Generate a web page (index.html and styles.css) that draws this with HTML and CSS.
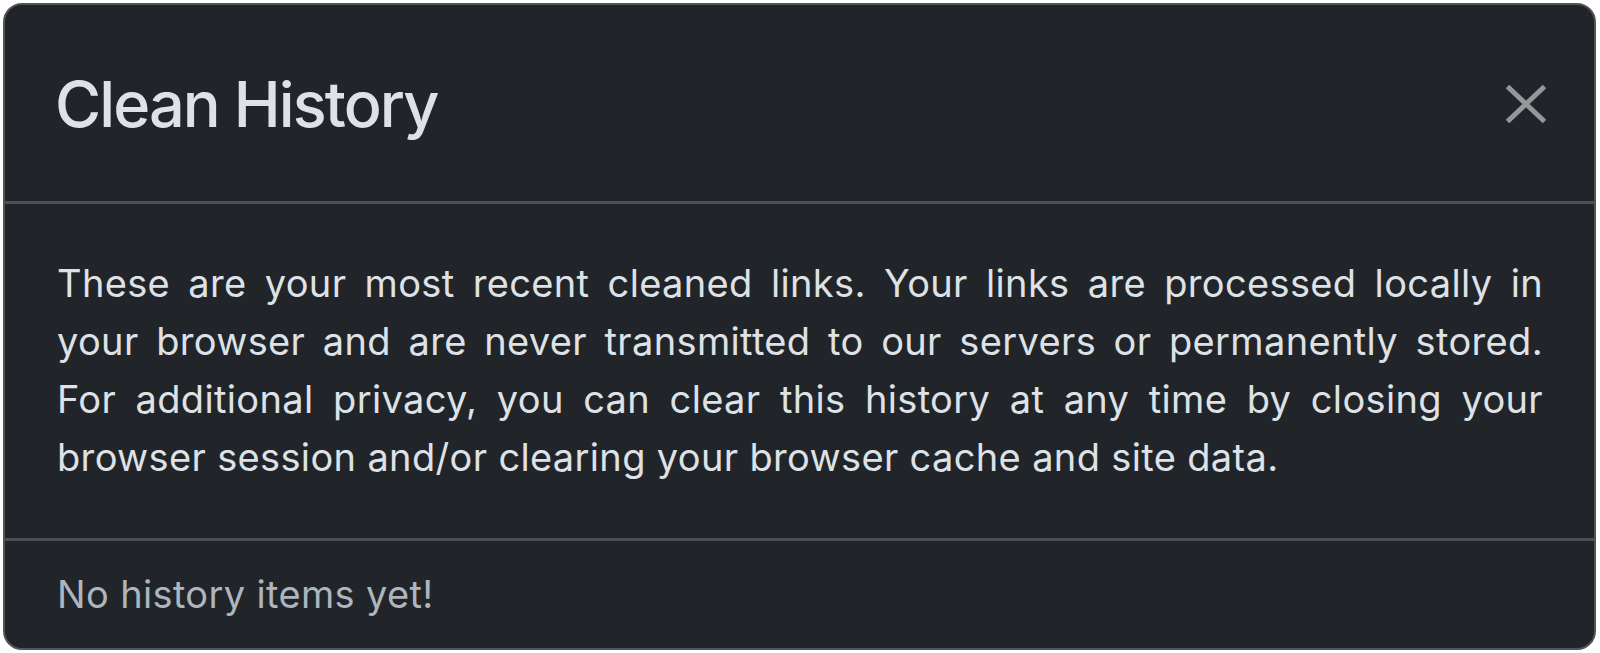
FILE: index.html
```html
<!DOCTYPE html>
<html lang="en">
<head>
<meta charset="utf-8">
<title>Clean History</title>
<link rel="stylesheet" href="styles.css">
</head>
<body>
<div class="modal">
  <div class="modal-header">
    <h2 class="modal-title">Clean History</h2>
    <button class="btn-close" type="button" aria-label="Close">
      <svg viewBox="0 0 42 40" width="42" height="40" aria-hidden="true">
        <path d="M2.5 2.5 L39.5 37.5 M39.5 2.5 L2.5 37.5" />
      </svg>
    </button>
  </div>
  <div class="modal-body">
    <p class="intro">
      <span class="line">These are your most recent cleaned links. Your links are processed locally in</span>
      <span class="line">your browser and are never transmitted to our servers or permanently stored.</span>
      <span class="line">For additional privacy, you can clear this history at any time by closing your</span>
      <span class="line last">browser session and/or clearing your browser cache and site data.</span>
    </p>
  </div>
  <div class="modal-footer">
    <p class="empty">No history items yet!</p>
  </div>
</div>
</body>
</html>
```

FILE: styles.css
```css
html, body {
  margin: 0;
  padding: 0;
  background: #ffffff;
}

body {
  padding: 3px 4px 5px 3px;
  font-family: Inter, "Liberation Sans", Arial, sans-serif;
  color: #dee2e6;
}

.modal {
  background: #212529;
  border: 2px solid #50555a;
  border-radius: 19px;
  overflow: hidden;
}

.modal-header {
  display: flex;
  align-items: center;
  justify-content: space-between;
  padding: 60px 47px 57px 50px;
  border-bottom: 3px solid #4a5056;
}

.modal-title {
  margin: 0;
  font-size: 63px;
  line-height: 78.6px;
  font-weight: 500;
  letter-spacing: -1.9px;
  color: #dee2e6;
}

.btn-close {
  display: flex;
  padding: 0;
  margin: 0;
  border: 0;
  background: transparent;
  cursor: pointer;
}

.btn-close svg path {
  fill: none;
  stroke: #95989b;
  stroke-width: 5;
  stroke-linecap: butt;
}

.modal-body {
  padding: 50px 51px 51px 52px;
  border-bottom: 3px solid #4a5056;
}

.intro {
  margin: 0;
  font-size: 38px;
  line-height: 58.3px;
  letter-spacing: 0.35px;
  color: #dee2e6;
}

.intro .line {
  display: block;
  text-align: justify;
  text-align-last: justify;
}

.intro .line.last {
  text-align: left;
  text-align-last: left;
}

.modal-footer {
  padding: 24.7px 51px 24px 52px;
}

.empty {
  margin: 0;
  font-size: 38px;
  line-height: 58.3px;
  letter-spacing: 0.35px;
  color: #adb5bd;
}
```
